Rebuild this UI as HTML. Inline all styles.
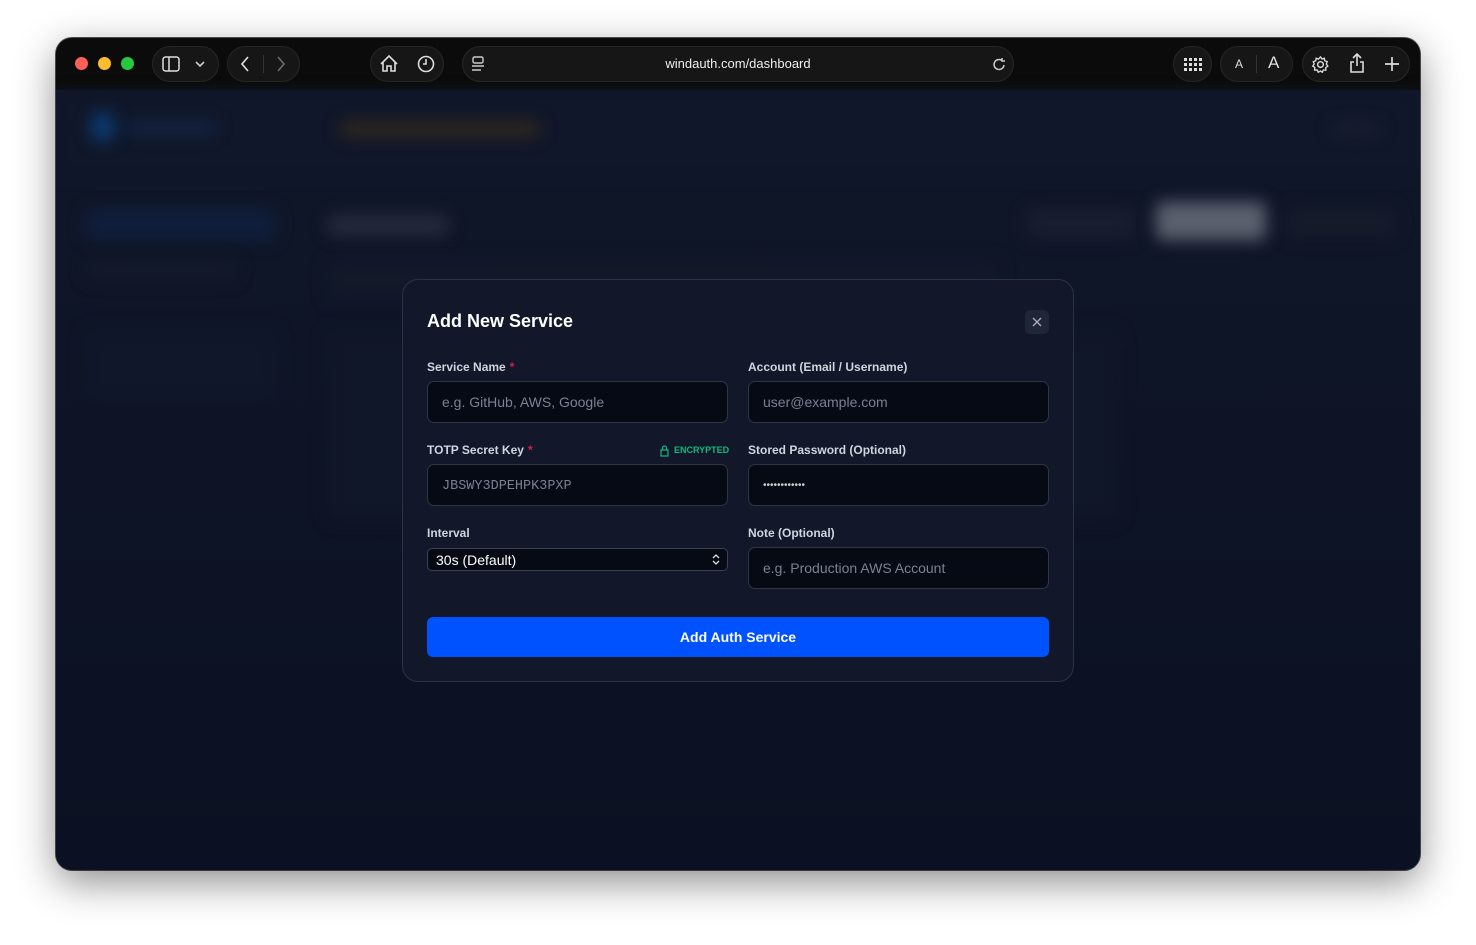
<!DOCTYPE html>
<html><head><style>
*{box-sizing:border-box;margin:0;padding:0}
body{width:1476px;height:945px;background:#fff;font-family:"Liberation Sans",sans-serif;position:relative;overflow:hidden}
.win{position:absolute;left:56px;top:38px;width:1364px;height:832px;border-radius:16px;overflow:hidden;background:#0c1224;box-shadow:0 12px 40px rgba(0,0,0,.45),0 0 0 1px #555}
.bar{position:absolute;left:0;top:0;width:100%;height:52px;background:#0b0b0b}
.pill{position:absolute;top:8px;height:36px;border-radius:18px;background:#161616;border:1px solid #262626}
.dot{position:absolute;top:19px;width:13px;height:13px;border-radius:50%}
.content{position:absolute;left:0;top:52px;width:100%;height:780px;background:linear-gradient(#101729,#0b1122)}
.b{position:absolute;filter:blur(8px);border-radius:6px}
.modal{position:absolute;left:346px;top:241px;width:672px;height:403px;background:#121829;border:1px solid #2a3245;border-radius:16px;color:#fff}
.lbl{position:absolute;font-size:12px;font-weight:bold;color:#cfd4dd}
.inp{position:absolute;width:301px;height:42px;background:#060a15;border:1px solid #2d3547;border-radius:7px;color:#7a8190;font-size:14px;padding:12px 14px}
.req{color:#e11d48;margin-left:4px}
svg{position:absolute}
</style></head><body>
<div class="win">
 <div class="bar">
  <div class="dot" style="left:19px;background:#fe5f57"></div>
  <div class="dot" style="left:42px;background:#febc2e"></div>
  <div class="dot" style="left:65px;background:#28c840"></div>
  <div class="pill" style="left:96px;width:67px"></div>
  <svg style="left:106px;top:18px" width="18" height="16" viewBox="0 0 18 16"><rect x="1" y="1" width="16" height="14" rx="2.5" fill="none" stroke="#ddd" stroke-width="1.5"/><line x1="7" y1="1" x2="7" y2="15" stroke="#ddd" stroke-width="1.5"/></svg>
  <svg style="left:139px;top:23px" width="10" height="7"><path d="M1 1l4 4 4-4" fill="none" stroke="#ccc" stroke-width="1.6"/></svg>
  <div class="pill" style="left:171px;width:73px"></div>
  <svg style="left:184px;top:18px" width="10" height="16"><path d="M8 1L2 8l6 7" fill="none" stroke="#ddd" stroke-width="1.7"/></svg>
  <div style="position:absolute;left:207px;top:17px;width:1px;height:18px;background:#333"></div>
  <svg style="left:220px;top:18px" width="10" height="16"><path d="M2 1l6 7-6 7" fill="none" stroke="#666" stroke-width="1.7"/></svg>
  <div class="pill" style="left:314px;width:74px"></div>
  <svg style="left:323px;top:16px" width="20" height="19"><path d="M2 10L10 2l8 8M4 8v9h4v-5h4v5h4V8" fill="none" stroke="#ddd" stroke-width="1.6"/></svg>
  <svg style="left:361px;top:17px" width="18" height="18"><circle cx="9" cy="9" r="7.5" fill="none" stroke="#ddd" stroke-width="1.6"/><path d="M9 4v5H6" fill="none" stroke="#ddd" stroke-width="1.6"/></svg>
  <div class="pill" style="left:406px;width:552px"></div>
  <svg style="left:415px;top:18px" width="14" height="16"><rect x="2" y="1" width="10" height="6" rx="1.5" fill="none" stroke="#ccc" stroke-width="1.4"/><line x1="1" y1="10" x2="13" y2="10" stroke="#ccc" stroke-width="1.4"/><line x1="1" y1="14" x2="10" y2="14" stroke="#ccc" stroke-width="1.4"/></svg>
  <div style="position:absolute;left:406px;width:552px;top:18px;text-align:center;color:#eee;font-size:13px">windauth.com/dashboard</div>
  <svg style="left:936px;top:19px" width="14" height="15"><path d="M12 8a5 5 0 1 1-2-4.5M10 1v3h3" fill="none" stroke="#ccc" stroke-width="1.5"/></svg>
  <div class="pill" style="left:1117px;width:39px"></div>
  <svg style="left:1128px;top:20px" width="18" height="14"><g fill="#ddd"><rect x="0" y="0" width="3" height="3"/><rect x="5" y="0" width="3" height="3"/><rect x="10" y="0" width="3" height="3"/><rect x="15" y="0" width="3" height="3"/><rect x="0" y="5" width="3" height="3"/><rect x="5" y="5" width="3" height="3"/><rect x="10" y="5" width="3" height="3"/><rect x="15" y="5" width="3" height="3"/><rect x="0" y="10" width="3" height="3"/><rect x="5" y="10" width="3" height="3"/><rect x="10" y="10" width="3" height="3"/><rect x="15" y="10" width="3" height="3"/></g></svg>
  <div class="pill" style="left:1164px;width:73px"></div>
  <div style="position:absolute;left:1179px;top:19px;color:#ddd;font-size:12px">A</div>
  <div style="position:absolute;left:1200px;top:17px;width:1px;height:18px;background:#333"></div>
  <div style="position:absolute;left:1212px;top:15px;color:#ddd;font-size:17px">A</div>
  <div class="pill" style="left:1246px;width:108px"></div>
  <svg style="left:1255px;top:17px" width="19" height="19" viewBox="0 0 20 20"><circle cx="10" cy="10" r="3" fill="none" stroke="#ddd" stroke-width="1.5"/><path d="M10 2l1.5 2.2 2.6-.8.4 2.7 2.6.9-1 2.5 1.6 2.2-2.2 1.5.2 2.7-2.7-.1-1.1 2.4L10 16.9l-2.4 1.2-1.1-2.4-2.7.1.2-2.7L1.8 11.7 3.4 9.5l-1-2.5L5 6.1l.4-2.7 2.6.8z" fill="none" stroke="#ddd" stroke-width="1.4"/></svg>
  <svg style="left:1293px;top:15px" width="16" height="21"><path d="M8 1v12M4 5l4-4 4 4M5 9H2v10h12V9h-3" fill="none" stroke="#ddd" stroke-width="1.6"/></svg>
  <svg style="left:1328px;top:18px" width="16" height="16"><path d="M8 1v14M1 8h14" stroke="#ddd" stroke-width="1.7"/></svg>
 </div>
 <div class="content">
  <div style="position:absolute;left:0;top:0;width:100%;height:88px;background:#10172a;filter:blur(6px)"></div>
  <div class="b" style="left:34px;top:22px;width:26px;height:30px;background:#0b3b70;border-radius:50%"></div>
  <div class="b" style="left:70px;top:32px;width:90px;height:12px;background:#122646"></div>
  <div class="b" style="left:284px;top:32px;width:200px;height:14px;background:#332a1c"></div>
  <div class="b" style="left:1275px;top:34px;width:50px;height:10px;background:#1a2030"></div>
  <div class="b" style="left:30px;top:120px;width:190px;height:30px;background:#101e3c"></div>
  <div class="b" style="left:30px;top:170px;width:150px;height:20px;background:#131a2a"></div>
  <div class="b" style="left:30px;top:240px;width:190px;height:70px;background:#10172a"></div>
  <div class="b" style="left:272px;top:125px;width:120px;height:20px;background:#262c3c"></div>
  <div class="b" style="left:272px;top:170px;width:670px;height:40px;background:#121929"></div>
  <div class="b" style="left:970px;top:118px;width:110px;height:30px;background:#181e2e"></div>
  <div class="b" style="left:1100px;top:112px;width:110px;height:38px;background:#5a606e"></div>
  <div class="b" style="left:1230px;top:118px;width:110px;height:30px;background:#151b2b"></div>
  <div class="b" style="left:272px;top:240px;width:790px;height:190px;background:#101728"></div>
 </div>
 <div class="modal">
  <div style="position:absolute;left:24px;top:31px;font-size:18px;font-weight:bold">Add New Service</div>
  <div style="position:absolute;left:622px;top:30px;width:24px;height:24px;border-radius:5px;background:#1f2637"></div>
  <svg style="left:629px;top:37px" width="10" height="10"><path d="M1 1l8 8M9 1L1 9" stroke="#aab" stroke-width="1.4"/></svg>
  <div class="lbl" style="left:24px;top:80px">Service Name<span class="req">*</span></div>
  <div class="lbl" style="left:345px;top:80px">Account (Email / Username)</div>
  <div class="inp" style="left:24px;top:101px">e.g. GitHub, AWS, Google</div>
  <div class="inp" style="left:345px;top:101px">user@example.com</div>
  <div class="lbl" style="left:24px;top:163px">TOTP Secret Key<span class="req">*</span></div>
  <svg style="left:257px;top:165px" width="9" height="12"><rect x="1" y="5" width="7" height="6" fill="none" stroke="#10b981" stroke-width="1.2"/><path d="M2.5 5V3a2 2 0 0 1 4 0v2" fill="none" stroke="#10b981" stroke-width="1.2"/></svg>
  <div style="position:absolute;left:271px;top:165px;font-size:9px;font-weight:bold;color:#10b981">ENCRYPTED</div>
  <div class="lbl" style="left:345px;top:163px">Stored Password (Optional)</div>
  <div class="inp" style="left:24px;top:184px;font-family:'Liberation Mono',monospace;font-size:13.5px;padding-top:14px">JBSWY3DPEHPK3PXP</div>
  <div class="inp" style="left:345px;top:184px;color:#ccc;font-size:10px;padding-top:15px">••••••••••••</div>
  <div class="lbl" style="left:24px;top:246px">Interval</div>
  <div class="lbl" style="left:345px;top:246px">Note (Optional)</div>
  <div class="inp" style="left:24px;top:268px;height:23px;padding:3px 8px;color:#fff;border-color:#3a4254;border-radius:5px">30s (Default)</div>
  <svg style="left:309px;top:273px" width="8" height="13"><path d="M1 5l3-3 3 3M1 8l3 3 3-3" fill="none" stroke="#ddd" stroke-width="1.3"/></svg>
  <div class="inp" style="left:345px;top:267px">e.g. Production AWS Account</div>
  <div style="position:absolute;left:24px;top:337px;width:622px;height:40px;background:#0052ff;border-radius:6px;text-align:center;line-height:40px;font-size:14px;font-weight:bold">Add Auth Service</div>
 </div>
</div>
</body></html>
